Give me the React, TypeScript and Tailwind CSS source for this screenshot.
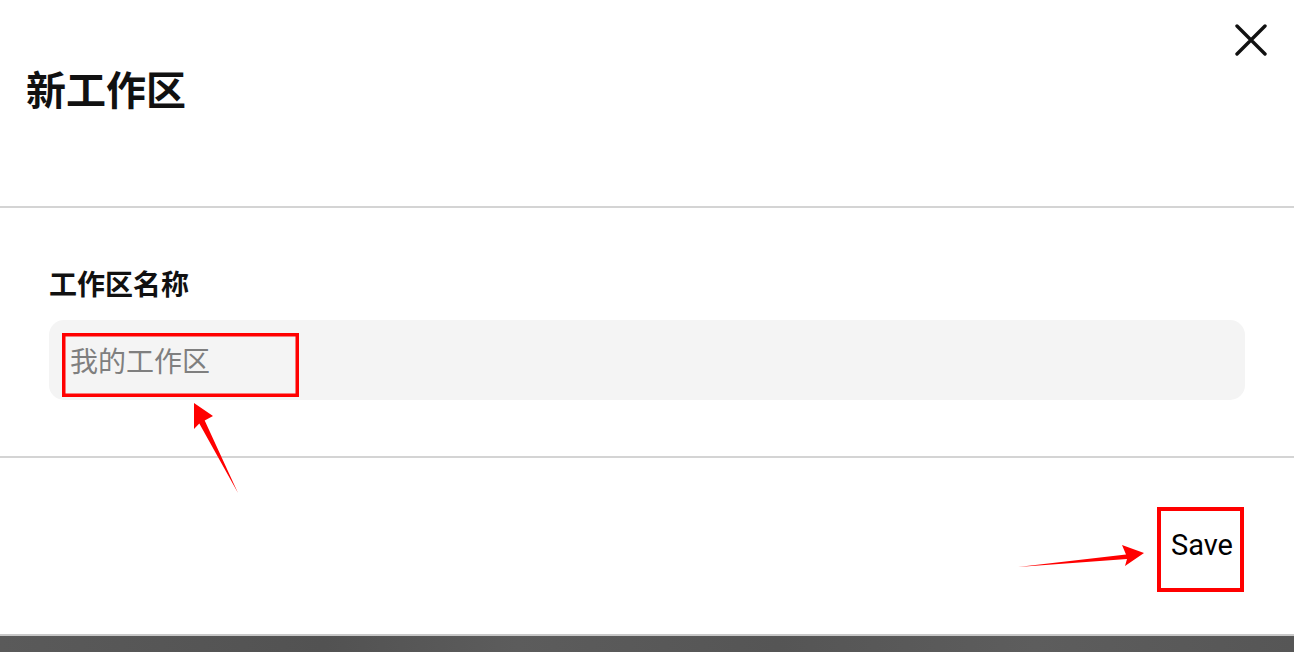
const cjk = { fontFamily: '"Noto Sans CJK SC", "Noto Sans", sans-serif' }

function CloseIcon() {
    return (
        <svg width="32" height="32" viewBox="0 0 32 32" fill="none">
            <path d="M2 2 L30 30 M30 2 L2 30" stroke="#111" strokeWidth="3.4" strokeLinecap="round" />
        </svg>
    )
}

// red markup drawn over the dialog
function Annotations() {
    return (
        <svg className="absolute inset-0 pointer-events-none" width="1294" height="652" viewBox="0 0 1294 652">
            <rect x="63.75" y="334.75" width="233.5" height="60.5" fill="none" stroke="#ff0000" strokeWidth="3.5" />
            <rect x="1159" y="509" width="83" height="81" fill="none" stroke="#ff0000" strokeWidth="4" />
            <polygon
                points="194,403 213,416 204.7,420.6 238,493 199.3,423.4 194,429"
                fill="#ff0000"
            />
            <polygon
                points="1144,553 1122,545 1126,554.5 1018,567 1127,559 1125,566"
                fill="#ff0000"
            />
        </svg>
    )
}

export default function App() {
    return (
        <div className="relative w-full h-screen flex flex-col bg-white overflow-hidden">
            {/* Header */}
            <div className="h-[206px] flex items-start justify-between">
                <h1 className="mt-[68px] ml-[26px] text-[40px] leading-[40px] font-bold text-[#111]" style={cjk}>
                    新工作区
                </h1>
                <button className="mt-[24px] mr-[27px]">
                    <CloseIcon />
                </button>
            </div>
            <div className="h-[2px] bg-[#d4d4d4]" />

            {/* Body */}
            <div className="h-[248px] px-[49px] pt-[61px]">
                <label className="block text-[28px] leading-[28px] font-bold text-[#111]" style={cjk}>
                    工作区名称
                </label>
                <div className="mt-[23px] h-[80px] rounded-[15px] bg-[#f4f4f4] flex items-center px-[21px]">
                    <input
                        className="w-full bg-transparent outline-none text-[28px] leading-[28px] text-[#111] placeholder:text-[#7f7f7f]"
                        style={cjk}
                        placeholder="我的工作区"
                    />
                </div>
            </div>
            <div className="h-[2px] bg-[#d4d4d4]" />

            {/* Footer */}
            <div className="h-[176px] flex items-center justify-end pr-[61px]">
                <button className="text-[29px] text-black" style={{ fontFamily: 'Roboto, "Liberation Sans", sans-serif' }}>
                    Save
                </button>
            </div>

            {/* Backdrop below the dialog */}
            <div className="h-[2px] bg-[#c8c8c8]" />
            <div className="flex-1 bg-[linear-gradient(90deg,#5a5a5a,#525252_25%,#5c5c5c_40%,#555_60%,#5d5d5d_80%,#565656)]" />

            <Annotations />
        </div>
    )
}
